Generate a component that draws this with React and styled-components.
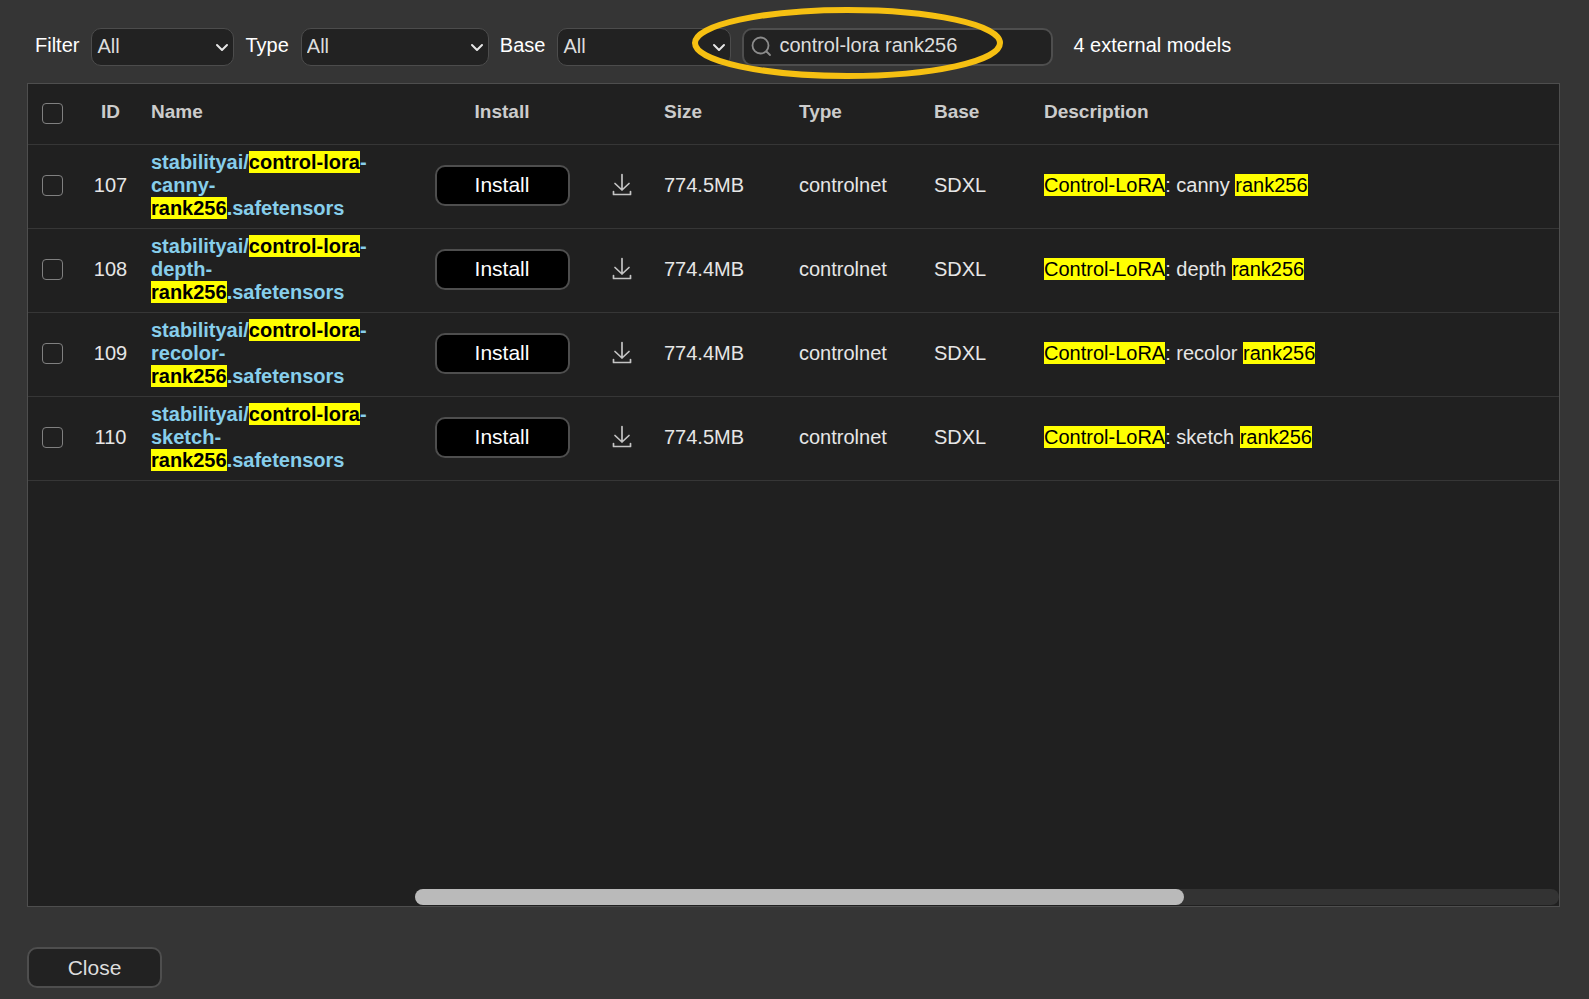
import React, { useState } from 'react';
import styled, { createGlobalStyle } from 'styled-components';

const GlobalStyle = createGlobalStyle`
  * { box-sizing: border-box; }
  body {
    margin: 0;
    background: #353535;
    color: #fff;
    font: 20px/23px "Liberation Sans", Arial, sans-serif;
  }
`;

const Dialog = styled.main`
  display: flex;
  flex-direction: column;
  min-height: 100vh;
  padding: 28px 29px 11px 27px;
`;

const Toolbar = styled.form`
  display: flex;
  align-items: center;
  height: 38px;
  padding-left: 8px;
  margin-bottom: 17px;
`;

const FilterGroup = styled.div`
  display: flex;
  align-items: center;
  gap: 12px;
  margin-right: 11px;
`;

const Label = styled.label`
  padding-bottom: 3px;
`;

const SelectBox = styled.div`
  position: relative;
  width: ${(p) => p.$width}px;
`;

const Select = styled.select`
  display: block;
  width: 100%;
  height: 38px;
  padding: 0 24px 2px 5px;
  appearance: none;
  border: 1px solid #4c4c4c;
  border-radius: 10px;
  background: #222;
  color: #ddd;
  font: inherit;
`;

const Chevron = styled.svg`
  position: absolute;
  right: 5px;
  top: 14px;
  pointer-events: none;
`;

const SearchBox = styled.div`
  position: relative;
  width: 311px;
`;

const SearchInput = styled.input`
  display: block;
  width: 100%;
  height: 38px;
  padding: 0 8px 3px 35px;
  border: 2px solid #4e4e4e;
  border-radius: 10px;
  background: #222;
  color: #ddd;
  font: inherit;
`;

const SearchIcon = styled.svg`
  position: absolute;
  left: 9px;
  top: 8px;
  pointer-events: none;
`;

const Callout = styled.svg`
  position: absolute;
  left: -50px;
  top: -21px;
  overflow: visible;
  pointer-events: none;
  z-index: 1;
`;

const Count = styled.output`
  padding: 0 0 3px 20px;
`;

const Panel = styled.section`
  display: flex;
  flex: 1;
  flex-direction: column;
  justify-content: space-between;
  border: 1px solid #4e4e4e;
  background: #202020;
`;

const Table = styled.table`
  width: 100%;
  table-layout: fixed;
  border-collapse: separate;
  border-spacing: 0;
`;

const Column = styled.col`
  width: ${(p) => (p.$width ? `${p.$width}px` : 'auto')};
`;

const HeadCell = styled.th`
  height: 61px;
  padding: 0 7px 6px;
  border-bottom: 1px solid #363636;
  color: #ccc;
  font-size: 19px;
  text-align: ${(p) => p.$align || 'left'};
`;

const Cell = styled.td`
  height: 84px;
  padding: 0 7px 3px;
  border-bottom: 1px solid #363636;
  color: #e6e6e6;
  text-align: ${(p) => p.$align || 'left'};
`;

const Checkbox = styled.input`
  display: block;
  width: 21px;
  height: 21px;
  margin: 0 auto;
  appearance: none;
  border: 1px solid #808080;
  border-radius: 4px;
  background: ${(p) => (p.checked ? '#87ceeb' : 'transparent')};
`;

const CheckHeadCell = styled(HeadCell)`
  padding-bottom: 2px;
`;

const ModelLink = styled.a`
  display: block;
  color: #87ceeb;
  font-weight: bold;
  text-decoration: none;
`;

const Mark = styled.mark`
  background: #ff0;
  color: #000;
`;

const Button = styled.button`
  display: block;
  width: 135px;
  height: 41px;
  padding: 0;
  border: 2px solid #4e4e4e;
  border-radius: 10px;
  background: ${(p) => (p.$strong ? '#000' : '#222')};
  color: ${(p) => (p.$strong ? '#fff' : '#ddd')};
  font: inherit;
  font-size: 21px;
`;

const InstallButton = styled(Button)`
  margin: 0 auto;
  padding-bottom: 2px;
`;

const IconButton = styled.button`
  display: block;
  width: 24px;
  height: 24px;
  margin: 0 auto;
  padding: 0;
  border: 0;
  background: none;
  color: #c4c4c4;
`;

const ScrollTrack = styled.div`
  height: 16px;
  margin: 0 0 1px 387px;
  border-radius: 8px;
  background: #333;
`;

const ScrollThumb = styled.div`
  width: 67.2%;
  height: 16px;
  border-radius: 8px;
  background: #bababa;
`;

const Footer = styled.footer`
  padding-top: 40px;
`;

const filters = [
  { name: 'Filter', width: 143 },
  { name: 'Type', width: 188 },
  { name: 'Base', width: 174 },
];

const columnWidths = [49, 67, 273, 170, 70, 135, 135, 110, null];

const models = [
  { id: 107, kind: 'canny', size: '774.5MB' },
  { id: 108, kind: 'depth', size: '774.4MB' },
  { id: 109, kind: 'recolor', size: '774.4MB' },
  { id: 110, kind: 'sketch', size: '774.5MB' },
];

function FilterSelect({ name, width }) {
  const id = `filter-${name.toLowerCase()}`;
  return (
    <FilterGroup>
      <Label htmlFor={id}>{name}</Label>
      <SelectBox $width={width}>
        <Select id={id}>
          <option>All</option>
        </Select>
        <Chevron width="14" height="12" viewBox="0 0 14 12" fill="none" stroke="#e6e6e6" strokeWidth="2" strokeLinecap="round" strokeLinejoin="round" aria-hidden="true">
          <path d="M2 3l5 5 5-5" />
        </Chevron>
      </SelectBox>
    </FilterGroup>
  );
}

function ModelRow({ model, checked, onToggle }) {
  return (
    <tr>
      <Cell>
        <Checkbox type="checkbox" aria-label={`Select ${model.id}`} checked={checked} onChange={onToggle} />
      </Cell>
      <Cell $align="center">{model.id}</Cell>
      <Cell>
        <ModelLink href="#">
          stabilityai/<Mark>control-lora</Mark>-<br />
          {model.kind}-<br />
          <Mark>rank256</Mark>.safetensors
        </ModelLink>
      </Cell>
      <Cell>
        <InstallButton type="button" $strong>Install</InstallButton>
      </Cell>
      <Cell>
        <IconButton type="button" aria-label={`Download ${model.id}`}>
          <svg width="24" height="24" viewBox="0 0 24 24" fill="none" stroke="currentColor" strokeWidth="1.7" strokeLinecap="round" strokeLinejoin="round">
            <path d="M12 1.500v15.500M5 10.500l7 6.500 7-6.500M3.500 18.500v3h17v-3" />
          </svg>
        </IconButton>
      </Cell>
      <Cell>{model.size}</Cell>
      <Cell>controlnet</Cell>
      <Cell>SDXL</Cell>
      <Cell>
        <Mark>Control-LoRA</Mark>: {model.kind} <Mark>rank256</Mark>
      </Cell>
    </tr>
  );
}

export default function App() {
  const [query, setQuery] = useState('control-lora rank256');
  const [selected, setSelected] = useState([]);
  const allSelected = selected.length === models.length;
  const toggle = (id) =>
    setSelected((ids) => (ids.includes(id) ? ids.filter((x) => x !== id) : [...ids, id]));

  return (
    <>
      <GlobalStyle />
      <Dialog>
        <Toolbar onSubmit={(e) => e.preventDefault()}>
          {filters.map((f) => (
            <FilterSelect key={f.name} {...f} />
          ))}
          <SearchBox>
            <SearchInput type="text" aria-label="Search models" value={query} onChange={(e) => setQuery(e.target.value)} />
            <SearchIcon width="21" height="21" viewBox="0 0 21 21" fill="none" stroke="#8c8c8c" strokeWidth="1.8" strokeLinecap="round" aria-hidden="true">
              <circle cx="9.500" cy="9.500" r="8" />
              <path d="M15.500 15.500l3.500 3.500" />
            </SearchIcon>
            <Callout width="311" height="72" viewBox="0 0 311 72" fill="none" aria-hidden="true">
              <ellipse cx="155.500" cy="36" rx="152.500" ry="33" stroke="#f6c012" strokeWidth="6" />
            </Callout>
          </SearchBox>
          <Count>4 external models</Count>
        </Toolbar>

        <Panel>
          <Table>
            <colgroup>
              {columnWidths.map((w, i) => (
                <Column key={i} $width={w} />
              ))}
            </colgroup>
            <thead>
              <tr>
                <CheckHeadCell>
                  <Checkbox
                    type="checkbox"
                    aria-label="Select all"
                    checked={allSelected}
                    onChange={() => setSelected(allSelected ? [] : models.map((m) => m.id))}
                  />
                </CheckHeadCell>
                <HeadCell $align="center">ID</HeadCell>
                <HeadCell>Name</HeadCell>
                <HeadCell $align="center">Install</HeadCell>
                <HeadCell />
                <HeadCell>Size</HeadCell>
                <HeadCell>Type</HeadCell>
                <HeadCell>Base</HeadCell>
                <HeadCell>Description</HeadCell>
              </tr>
            </thead>
            <tbody>
              {models.map((m) => (
                <ModelRow key={m.id} model={m} checked={selected.includes(m.id)} onToggle={() => toggle(m.id)} />
              ))}
            </tbody>
          </Table>
          <ScrollTrack>
            <ScrollThumb />
          </ScrollTrack>
        </Panel>

        <Footer>
          <Button type="button">Close</Button>
        </Footer>
      </Dialog>
    </>
  );
}
